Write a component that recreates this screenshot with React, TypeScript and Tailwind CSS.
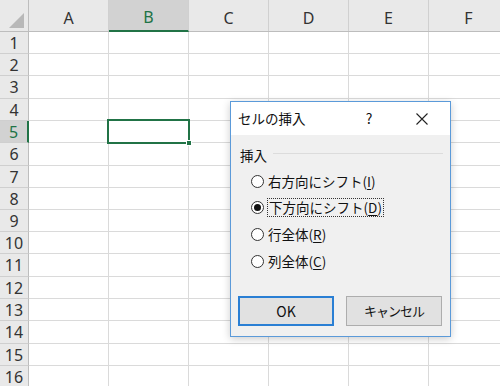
import React from 'react';

const cols = ['A', 'B', 'C', 'D', 'E', 'F'];
// row heights incl. the 1px gridline, as Excel draws them at this zoom
const rows: { n: number; h: string }[] = [
  { n: 1, h: 'h-[22px]' },
  { n: 2, h: 'h-[22px]' },
  { n: 3, h: 'h-[23px]' },
  { n: 4, h: 'h-[22px]' },
  { n: 5, h: 'h-[22px]' },
  { n: 6, h: 'h-[23px]' },
  { n: 7, h: 'h-[22px]' },
  { n: 8, h: 'h-[22px]' },
  { n: 9, h: 'h-[22px]' },
  { n: 10, h: 'h-[22px]' },
  { n: 11, h: 'h-[23px]' },
  { n: 12, h: 'h-[22px]' },
  { n: 13, h: 'h-[22px]' },
  { n: 14, h: 'h-[23px]' },
  { n: 15, h: 'h-[22px]' },
  { n: 16, h: 'h-[22px]' },
];

const options = [
  { text: '右方向にシフト', key: 'I', checked: false, h: 'h-[26px]' },
  { text: '下方向にシフト', key: 'D', checked: true, h: 'h-[27px]' },
  { text: '行全体', key: 'R', checked: false, h: 'h-[27px]' },
  { text: '列全体', key: 'C', checked: false, h: 'h-[27px]' },
];

const Radio = ({ checked }: { checked: boolean }) => (
  <span className="w-[13px] h-[13px] rounded-full border border-[#333] bg-white flex items-center justify-center shrink-0">
    {checked && <span className="w-[7px] h-[7px] rounded-full bg-[#111]" />}
  </span>
);

const InsertDialog = () => (
  <div
    className="absolute left-[230px] top-[101px] w-[221px] h-[236px] border border-[#5b9ad9] bg-[#f0f0f0] shadow-[0_2px_8px_rgba(0,0,0,0.2)] flex flex-col text-[#111]"
    style={{ fontFamily: '"Noto Sans CJK JP", "Noto Sans", sans-serif' }}
  >
    {/* title bar */}
    <div className="h-[33px] bg-white flex items-center pl-[7px] pr-[5px] shrink-0">
      <span className="text-[13.5px] flex-1">セルの挿入</span>
      <span className="w-[20px] text-center text-[14px]">?</span>
      <span className="w-[46px] ml-[20px] flex items-center justify-center">
        <svg width="12" height="12" viewBox="0 0 12 12" stroke="#222" strokeWidth="1.1" fill="none">
          <path d="M0.5 0.5 L11.5 11.5 M11.5 0.5 L0.5 11.5" />
        </svg>
      </span>
    </div>

    {/* body */}
    <div className="flex-1 flex flex-col">
      <div className="mt-[11px] h-[18px] flex items-center pl-[9px] pr-[7px]">
        <span className="text-[13.5px] leading-[18px]">挿入</span>
        <span className="flex-1 h-px bg-[#dcdcdc] ml-[6px] -mt-[3px]" />
      </div>

      <div className="mt-[4px] flex flex-col pl-[20px]">
        {options.map((o) => (
          <div key={o.key} className={`${o.h} flex items-center`}>
            <Radio checked={o.checked} />
            <span
              className={`ml-[3px] text-[13.5px] leading-[17px] ${
                o.checked ? 'border border-dotted border-[#333] px-[1px]' : 'border border-transparent'
              }`}
            >
              {o.text}(<span className="underline underline-offset-2">{o.key}</span>)
            </span>
          </div>
        ))}
      </div>

      <div className="mt-[21px] flex gap-[12px] pl-[7px]">
        <button className="w-[96px] h-[30px] border-2 border-[#2a7fd4] bg-[#e1e1e1] text-[14px] flex items-center justify-center">
          OK
        </button>
        <button className="w-[96px] h-[30px] border border-[#adadad] bg-[#e1e1e1] text-[13px] tracking-[-1px] flex items-center justify-center">
          キャンセル
        </button>
      </div>
    </div>
  </div>
);

export default function App() {
  return (
    <div
      className="relative w-[500px] h-[386px] overflow-hidden bg-white"
      style={{ fontFamily: '"Noto Sans", "Open Sans", sans-serif' }}
    >
      {/* column headers */}
      <div className="flex h-[32px] bg-[#e9e9e9] border-b border-[#bdbdbd]">
        <div className="w-[29px] shrink-0 border-r border-[#bdbdbd] relative">
          <div className="absolute right-[4px] bottom-[3px] w-0 h-0 border-l-[15px] border-l-transparent border-b-[15px] border-b-[#b8b8b8]" />
        </div>
        {cols.map((c) => (
          <div
            key={c}
            className={`w-[80px] shrink-0 border-r border-[#d0d0d0] flex items-end justify-center pb-[1px] text-[16px] ${
              c === 'B' ? 'bg-[#d2d2d2] text-[#217346] border-b-2 border-b-[#217346] -mb-px' : 'text-[#333]'
            }`}
          >
            {c}
          </div>
        ))}
      </div>

      {/* grid rows */}
      {rows.map((r) => (
        <div key={r.n} className={`flex ${r.h} border-b border-[#dadada]`}>
          <div
            className={`w-[29px] shrink-0 flex items-center justify-center text-[16px] border-r ${
              r.n === 5
                ? 'bg-[#d2d2d2] text-[#217346] border-r-2 border-r-[#217346]'
                : 'bg-[#e9e9e9] text-[#333] border-r-[#bdbdbd]'
            } -mb-px border-b border-b-[#cfcfcf]`}
          >
            {r.n}
          </div>
          {cols.map((c) => (
            <div key={c} className="w-[80px] shrink-0 border-r border-[#dadada]" />
          ))}
        </div>
      ))}

      {/* active cell B5 */}
      <div className="absolute left-[107px] top-[119px] w-[83px] h-[25px] border-2 border-[#217346]">
        <div className="absolute -right-[4px] -bottom-[4px] w-[6px] h-[6px] bg-[#217346] border border-white" />
      </div>

      <InsertDialog />
    </div>
  );
}
